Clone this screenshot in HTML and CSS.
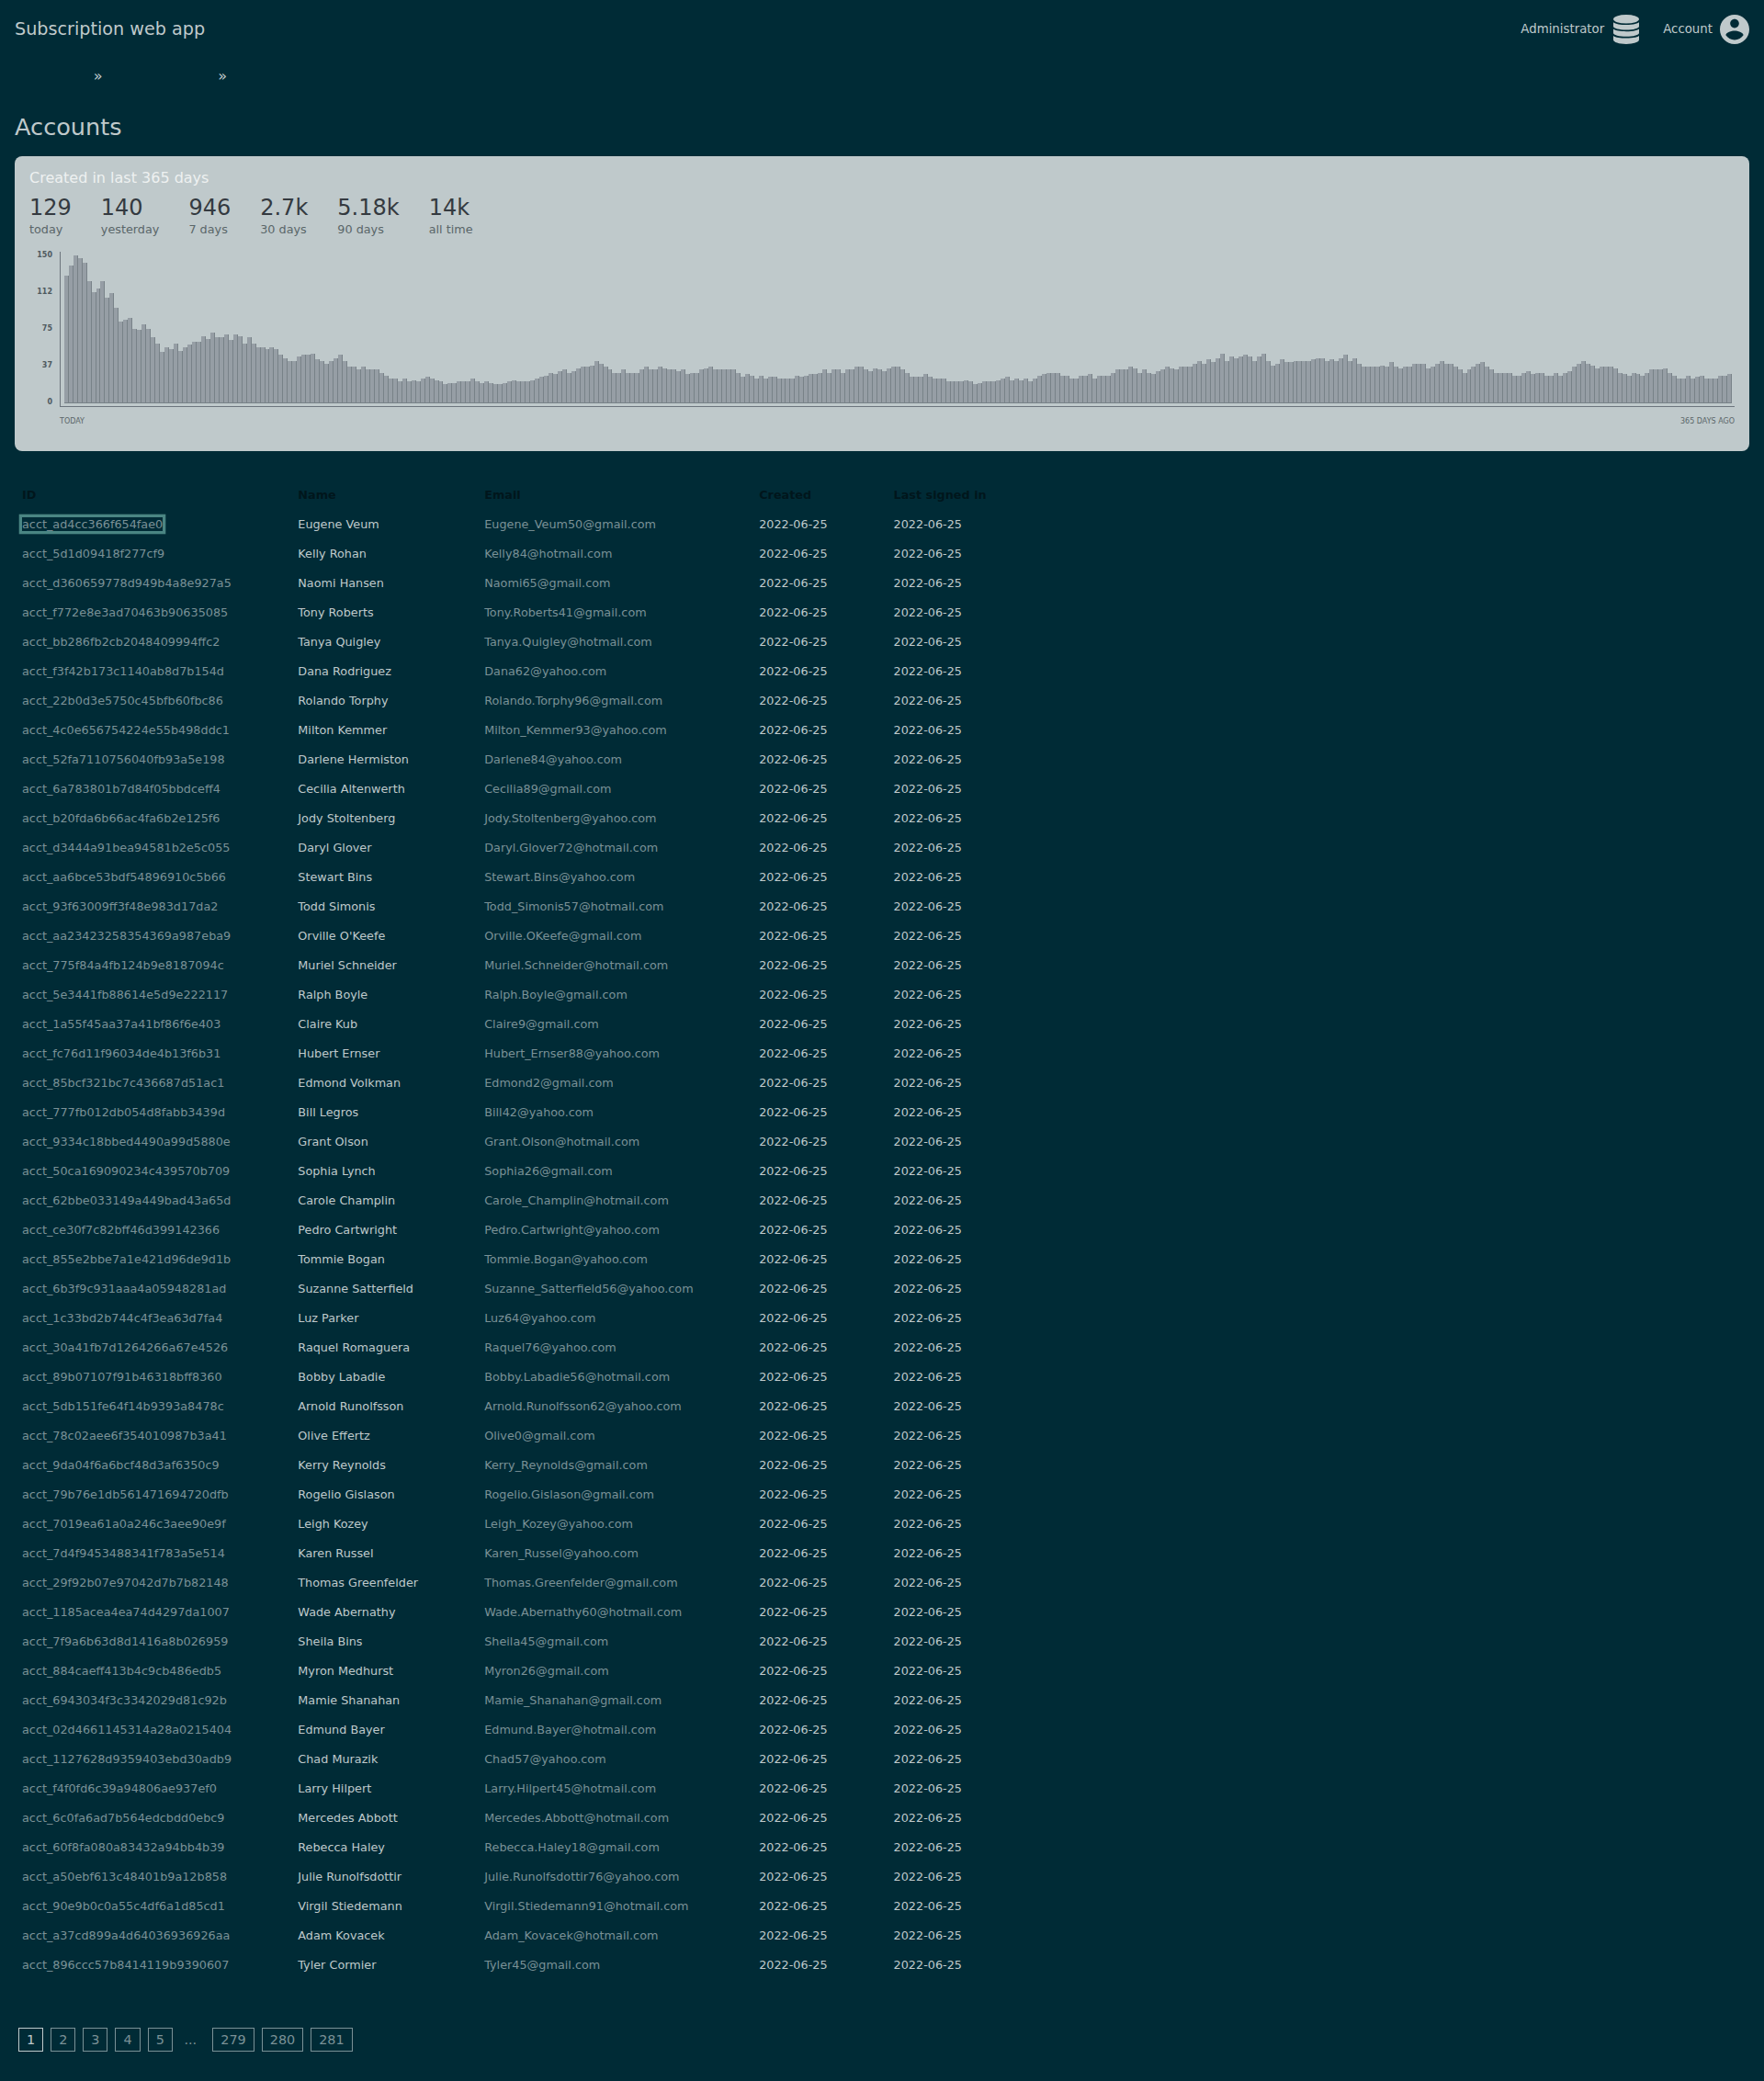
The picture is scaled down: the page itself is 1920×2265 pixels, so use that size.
FILE: index.html
```html
<!DOCTYPE html>
<html lang="en">
<head>
<meta charset="utf-8">
<title>Accounts</title>
<link rel="stylesheet" href="styles.css">
</head>
<body>
<header class="header">
  <div class="header-title">Subscription web app</div>
  <nav class="header-nav">
    <a class="header-link"><span>Administrator</span>
      <svg class="icon-database" viewBox="0 0 28 32" aria-hidden="true">
        <ellipse cx="14" cy="4.8" rx="14" ry="4.8"/>
        <path d="M0 8.2C2.5 10.3 8 11 14 11S25.5 10.3 28 8.2V12.8C28 14.9 21.7 16.5 14 16.5S0 14.9 0 12.8Z"/>
        <path d="M0 15.6C2.5 17.5 8 18.2 14 18.2S25.5 17.5 28 15.6V20C28 22.1 21.7 23.8 14 23.8S0 22.1 0 20Z"/>
        <path d="M0 22.9C2.5 24.8 8 25.5 14 25.5S25.5 24.8 28 22.9V27.3C28 29.9 21.7 32 14 32S0 29.9 0 27.3Z"/>
      </svg>
    </a>
    <a class="header-link"><span>Account</span>
      <svg class="icon-account" viewBox="2 2 20 20" aria-hidden="true"><path d="M12 2C6.48 2 2 6.48 2 12s4.48 10 10 10 10-4.48 10-10S17.52 2 12 2zm0 3c1.66 0 3 1.34 3 3s-1.34 3-3 3-3-1.34-3-3 1.34-3 3-3zm0 14.2c-2.5 0-4.71-1.28-6-3.22.03-1.99 4-3.08 6-3.08 1.99 0 5.97 1.09 6 3.08-1.29 1.94-3.5 3.22-6 3.22z"/></svg>
    </a>
  </nav>
</header>
<nav class="breadcrumb"><span>»</span><span>»</span></nav>
<main>
  <h1 class="page-title">Accounts</h1>
  <section class="card">
    <h2 class="card-title">Created in last 365 days</h2>
    <ul class="stats">
      <li><b>129</b><span>today</span></li>
      <li><b>140</b><span>yesterday</span></li>
      <li><b>946</b><span>7 days</span></li>
      <li><b>2.7k</b><span>30 days</span></li>
      <li><b>5.18k</b><span>90 days</span></li>
      <li><b>14k</b><span>all time</span></li>
    </ul>
    <div class="chart">
      <div class="ticks"><span>150</span><span>112</span><span>75</span><span>37</span><span>0</span></div>
      <div class="plot-column">
        <div class="plot" id="plot"></div>
        <div class="range"><span>TODAY</span><span>365 DAYS AGO</span></div>
      </div>
    </div>
  </section>
  <table class="accounts">
    <colgroup><col class="col-id"><col class="col-name"><col class="col-email"><col class="col-date"><col class="col-date"></colgroup>
    <thead><tr><th>ID</th><th>Name</th><th>Email</th><th>Created</th><th>Last signed in</th></tr></thead>
    <tbody id="rows"></tbody>
  </table>
  <nav class="pages">
    <a class="current">1</a><a>2</a><a>3</a><a>4</a><a>5</a><span>...</span><a>279</a><a>280</a><a>281</a>
  </nav>
</main>
<script src="accounts.js"></script>
</body>
</html>
```
FILE: styles.css
```css
* { box-sizing: border-box; }
body {
  margin: 0;
  min-height: 2265px;
  padding: 0 16px;
  background: #002b36;
  color: #bfc9cb;
  font-family: "DejaVu Sans", Verdana, sans-serif;
  font-size: 12.8px;
  line-height: 15px;
}
h1, h2 { margin: 0; font-weight: 400; }
ul { margin: 0; padding: 0; list-style: none; }

.header { display: flex; justify-content: space-between; height: 74px; padding-top: 16px; }
.header-title { margin-top: 4px; font-size: 19.2px; line-height: 23px; }
.header-nav { display: flex; gap: 24px; height: 32px; font-size: 13.333px; }
.header-link { display: flex; gap: 8px; }
.header-link span { margin-top: 8px; }
.header-link svg { width: 32px; height: 32px; fill: #bfc9cb; }

.breadcrumb { display: flex; gap: 125.8px; height: 49px; padding-left: 85.7px; font-size: 16px; line-height: 19px; }
.breadcrumb span { height: 19px; margin-top: -1px; }

.page-title { font-size: 25.6px; line-height: 30px; margin-bottom: 17px; }

.card { height: 321px; padding: 15px 16px 0; border-radius: 8px; background: #bfc9cb; }
.card-title { color: #eef1f1; font-size: 16px; line-height: 17px; }
.stats { display: flex; gap: 32px; margin-top: 12px; }
.stats li { display: flex; flex-direction: column; gap: 4px; }
.stats b { color: #343a40; font-size: 24px; font-weight: 400; line-height: 24px; }
.stats span { color: #5a6669; }

.chart { display: flex; margin-top: 15px; font-size: 8px; line-height: 9px; }
.ticks { display: flex; flex-direction: column; gap: 31px; width: 25px; padding-top: 1px; color: #4f5a5f; font-weight: 700; text-align: right; }
.plot-column { flex: 1; margin-left: 8px; padding-top: 2px; }
.plot {
  display: flex;
  align-items: flex-end;
  height: 169px;
  padding: 0 3px 3px 4px;
  border-left: 1px solid #6c757d;
  border-bottom: 1px solid #6c757d;
}
.bar { flex: none; background: #969ea5; border-right: 1px solid #788288; border-bottom: 1px solid #788288; }
.range { display: flex; justify-content: space-between; margin-top: 11px; color: #5a6669; }

.accounts { table-layout: fixed; width: 1094px; margin-top: 32px; border-collapse: collapse; }
.col-id { width: 300.3px; }
.col-name { width: 202.9px; }
.col-email { width: 299px; }
.col-date { width: 146.4px; }
.accounts th, .accounts td { height: 32px; padding: 8px 8px 9px; text-align: left; white-space: nowrap; vertical-align: top; }
.accounts th { color: #00161c; font-weight: 700; }
.accounts a { color: #7a9196; }
.accounts a.focused { box-shadow: 0 0 0 3.3px #4a8583; }

.pages { display: flex; gap: 8px; margin-top: 52px; padding-left: 4px; font-size: 14.4px; line-height: 16px; color: #7a9196; }
.pages a { padding: 4px 8px; border: 1px solid #7a9196; }
.pages a.current { color: #bfc9cb; border-color: #bfc9cb; }
.pages span { width: 27.5px; padding: 5px 0 5px 4.6px; }
```
FILE: accounts.js
```js
// Column height in pixels for each day, today first.
const heights = [
  139,150,161,158,153,133,121,125,133,115,120,104,89,91,93,81,80,86,81,72,65,56,61,59,65,57,61,64,67,67,73,70,77,72,72,75,69,75,73,65,
  72,65,61,61,59,61,59,53,49,46,46,51,53,53,54,48,46,43,46,49,53,46,40,40,37,40,37,37,37,33,30,27,27,24,27,24,25,24,27,29,
  27,25,24,21,22,22,24,24,24,27,24,22,24,22,21,21,22,24,25,24,24,24,25,27,29,30,33,32,35,37,33,35,38,40,40,41,46,43,40,37,
  33,33,37,33,33,33,37,40,37,37,40,38,37,37,35,37,32,33,33,37,38,40,37,37,37,37,37,33,29,32,30,27,30,27,29,29,27,27,27,27,
  30,29,30,32,32,33,37,33,37,37,33,37,37,40,40,37,35,38,37,35,38,40,40,37,33,29,29,29,32,29,27,27,27,24,24,24,24,25,24,21,
  22,24,24,24,25,27,29,25,27,25,27,24,27,30,32,33,33,33,30,30,27,27,30,30,32,27,30,30,30,33,37,37,37,40,38,33,37,33,32,35,
  37,40,38,37,40,40,40,43,46,43,48,45,49,54,46,51,49,51,53,51,46,51,54,46,41,43,48,45,45,46,46,46,46,48,49,49,46,48,46,49,
  53,46,49,43,40,40,40,40,41,40,45,40,38,40,40,43,43,43,38,40,43,46,43,43,40,37,33,37,40,43,45,40,37,33,33,33,33,30,30,33,
  35,32,33,33,30,30,33,30,33,35,40,43,46,43,41,38,40,40,40,38,33,32,30,33,32,30,33,37,37,37,38,33,30,27,27,30,27,29,30,27,
  27,27,30,30,32
];

const accounts = `
acct_ad4cc366f654fae0|Eugene Veum|Eugene_Veum50@gmail.com
acct_5d1d09418f277cf9|Kelly Rohan|Kelly84@hotmail.com
acct_d360659778d949b4a8e927a5|Naomi Hansen|Naomi65@gmail.com
acct_f772e8e3ad70463b90635085|Tony Roberts|Tony.Roberts41@gmail.com
acct_bb286fb2cb2048409994ffc2|Tanya Quigley|Tanya.Quigley@hotmail.com
acct_f3f42b173c1140ab8d7b154d|Dana Rodriguez|Dana62@yahoo.com
acct_22b0d3e5750c45bfb60fbc86|Rolando Torphy|Rolando.Torphy96@gmail.com
acct_4c0e656754224e55b498ddc1|Milton Kemmer|Milton_Kemmer93@yahoo.com
acct_52fa7110756040fb93a5e198|Darlene Hermiston|Darlene84@yahoo.com
acct_6a783801b7d84f05bbdceff4|Cecilia Altenwerth|Cecilia89@gmail.com
acct_b20fda6b66ac4fa6b2e125f6|Jody Stoltenberg|Jody.Stoltenberg@yahoo.com
acct_d3444a91bea94581b2e5c055|Daryl Glover|Daryl.Glover72@hotmail.com
acct_aa6bce53bdf54896910c5b66|Stewart Bins|Stewart.Bins@yahoo.com
acct_93f63009ff3f48e983d17da2|Todd Simonis|Todd_Simonis57@hotmail.com
acct_aa23423258354369a987eba9|Orville O'Keefe|Orville.OKeefe@gmail.com
acct_775f84a4fb124b9e8187094c|Muriel Schneider|Muriel.Schneider@hotmail.com
acct_5e3441fb88614e5d9e222117|Ralph Boyle|Ralph.Boyle@gmail.com
acct_1a55f45aa37a41bf86f6e403|Claire Kub|Claire9@gmail.com
acct_fc76d11f96034de4b13f6b31|Hubert Ernser|Hubert_Ernser88@yahoo.com
acct_85bcf321bc7c436687d51ac1|Edmond Volkman|Edmond2@gmail.com
acct_777fb012db054d8fabb3439d|Bill Legros|Bill42@yahoo.com
acct_9334c18bbed4490a99d5880e|Grant Olson|Grant.Olson@hotmail.com
acct_50ca169090234c439570b709|Sophia Lynch|Sophia26@gmail.com
acct_62bbe033149a449bad43a65d|Carole Champlin|Carole_Champlin@hotmail.com
acct_ce30f7c82bff46d399142366|Pedro Cartwright|Pedro.Cartwright@yahoo.com
acct_855e2bbe7a1e421d96de9d1b|Tommie Bogan|Tommie.Bogan@yahoo.com
acct_6b3f9c931aaa4a05948281ad|Suzanne Satterfield|Suzanne_Satterfield56@yahoo.com
acct_1c33bd2b744c4f3ea63d7fa4|Luz Parker|Luz64@yahoo.com
acct_30a41fb7d1264266a67e4526|Raquel Romaguera|Raquel76@yahoo.com
acct_89b07107f91b46318bff8360|Bobby Labadie|Bobby.Labadie56@hotmail.com
acct_5db151fe64f14b9393a8478c|Arnold Runolfsson|Arnold.Runolfsson62@yahoo.com
acct_78c02aee6f354010987b3a41|Olive Effertz|Olive0@gmail.com
acct_9da04f6a6bcf48d3af6350c9|Kerry Reynolds|Kerry_Reynolds@gmail.com
acct_79b76e1db561471694720dfb|Rogelio Gislason|Rogelio.Gislason@gmail.com
acct_7019ea61a0a246c3aee90e9f|Leigh Kozey|Leigh_Kozey@yahoo.com
acct_7d4f9453488341f783a5e514|Karen Russel|Karen_Russel@yahoo.com
acct_29f92b07e97042d7b7b82148|Thomas Greenfelder|Thomas.Greenfelder@gmail.com
acct_1185acea4ea74d4297da1007|Wade Abernathy|Wade.Abernathy60@hotmail.com
acct_7f9a6b63d8d1416a8b026959|Sheila Bins|Sheila45@gmail.com
acct_884caeff413b4c9cb486edb5|Myron Medhurst|Myron26@gmail.com
acct_6943034f3c3342029d81c92b|Mamie Shanahan|Mamie_Shanahan@gmail.com
acct_02d4661145314a28a0215404|Edmund Bayer|Edmund.Bayer@hotmail.com
acct_1127628d9359403ebd30adb9|Chad Murazik|Chad57@yahoo.com
acct_f4f0fd6c39a94806ae937ef0|Larry Hilpert|Larry.Hilpert45@hotmail.com
acct_6c0fa6ad7b564edcbdd0ebc9|Mercedes Abbott|Mercedes.Abbott@hotmail.com
acct_60f8fa080a83432a94bb4b39|Rebecca Haley|Rebecca.Haley18@gmail.com
acct_a50ebf613c48401b9a12b858|Julie Runolfsdottir|Julie.Runolfsdottir76@yahoo.com
acct_90e9b0c0a55c4df6a1d85cd1|Virgil Stiedemann|Virgil.Stiedemann91@hotmail.com
acct_a37cd899a4d64036936926aa|Adam Kovacek|Adam_Kovacek@hotmail.com
acct_896ccc57b8414119b9390607|Tyler Cormier|Tyler45@gmail.com
`.trim().split("\n").map(line => line.split("|"));

const date = "2022-06-25";

// Whole-pixel column edges keep the dividing lines crisp.
const edge = i => Math.round(4.7 + i * 4.97333);

document.getElementById("plot").innerHTML =
  heights.map((h, i) => `<div class="bar" style="width:${edge(i + 1) - edge(i)}px;height:${h}px"></div>`).join("");

document.getElementById("rows").innerHTML = accounts.map(([id, name, email], i) =>
  `<tr><td><a${i === 0 ? ' class="focused"' : ""}>${id}</a></td><td>${name}</td><td><a>${email}</a></td><td>${date}</td><td>${date}</td></tr>`
).join("");
```
